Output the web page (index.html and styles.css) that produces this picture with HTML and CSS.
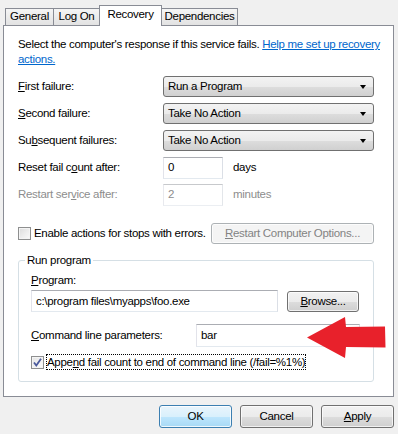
FILE: index.html
```
<!DOCTYPE html>
<html lang="en">
<head>
    <meta charset="UTF-8">
    <meta name="viewport" content="width=device-width, initial-scale=1.0">
    <title>Service Properties - Recovery</title>
    <link rel="stylesheet" href="styles.css">
</head>
<body>
    <div class="tabs">
        <div class="tab tab-general">General</div>
        <div class="tab tab-logon">Log On</div>
        <div class="tab tab-active">Recovery</div>
        <div class="tab tab-deps">Dependencies</div>
    </div>

    <div class="panel">
        <p class="intro">Select the computer's response if this service fails. <a href="#">Help me set up recovery<br>actions.</a></p>

        <!-- Acciones por fallo -->
        <div class="failures">
            <span class="label"><u>F</u>irst failure:</span>
            <div class="combo"><span>Run a Program</span><span class="caret"></span></div>

            <span class="label"><u>S</u>econd failure:</span>
            <div class="combo"><span>Take No Action</span><span class="caret"></span></div>

            <span class="label">Su<u>b</u>sequent failures:</span>
            <div class="combo"><span>Take No Action</span><span class="caret"></span></div>

            <span class="label">Reset fail c<u>o</u>unt after:</span>
            <div class="with-unit">
                <div class="textbox short">0</div>
                <span>days</span>
            </div>

            <span class="label disabled">Restart ser<u>v</u>ice after:</span>
            <div class="with-unit disabled">
                <div class="textbox short textbox-off">2</div>
                <span>minutes</span>
            </div>
        </div>

        <div class="check-row">
            <span class="checkbox"></span>
            <span>Enable actions for stops with errors.</span>
            <div class="button button-off restart-btn"><u>R</u>estart Computer Options...</div>
        </div>

        <fieldset class="group">
            <legend>Run program</legend>
            <div class="group-body">
                <div class="field-label"><u>P</u>rogram:</div>
                <div class="program-row">
                    <div class="textbox program-box">c:\program files\myapps\foo.exe</div>
                    <div class="button browse-btn"><u>B</u>rowse...</div>
                </div>

                <div class="command-row">
                    <span class="command-label"><u>C</u>ommand line parameters:</span>
                    <div class="textbox command-box">bar</div>
                </div>

                <div class="append-row">
                    <span class="checkbox checked">
                        <svg width="11" height="11" viewBox="0 0 11 11"><path d="M2 5.5 L4.3 8.5 L9 1.8" fill="none" stroke="#4b5a9c" stroke-width="1.8"/></svg>
                    </span>
                    <span class="focus-text">Appe<u>n</u>d fail count to end of command line (/fail=%1%)</span>
                </div>
            </div>
        </fieldset>
    </div>

    <div class="actions">
        <div class="button button-default">OK</div>
        <div class="button">Cancel</div>
        <div class="button"><u>A</u>pply</div>
    </div>

    <!-- flecha roja encima del diálogo -->
    <svg class="arrow" width="80" height="43" viewBox="0 0 80 43">
        <path d="M0 21.5 L38 1 L39 11 L78 10.5 L78.5 31.5 L39 31 L38 42 Z" fill="#e8212b"/>
    </svg>
</body>
</html>
```

FILE: styles.css
```
body {
    margin: 0;
    width: 398px;
    height: 434px;
    overflow: hidden;
    background-color: #f0f0f0;
    font-family: "Liberation Sans", Arial, sans-serif;
    font-size: 11.5px;
    letter-spacing: -0.3px;
    line-height: 15px;
    color: #000;
}

u {
    text-decoration: underline;
    text-underline-offset: 1px;
}

/* pestañas */
.tabs {
    display: flex;
    align-items: flex-end;
    height: 21px;
    padding: 5px 0 0 5px;
    margin-bottom: -1px;
}

.tab {
    box-sizing: border-box;
    height: 17px;
    margin-bottom: 1px;
    margin-left: -1px;
    border: 1px solid #898c95;
    border-bottom: none;
    background: linear-gradient(#f5f5f5, #e2e2e2);
    text-align: center;
    line-height: 15px;
}

.tab-general { width: 49px; margin-left: 0; }
.tab-logon { width: 47px; }
.tab-deps { width: 77px; }

.tab-active {
    width: 63px;
    height: 21px;
    margin-bottom: 0;
    background: #fff;
    position: relative;
    z-index: 1;
    line-height: 17px;
}

.panel {
    box-sizing: border-box;
    width: 391px;
    margin-left: 3px;
    border: 1px solid #898c95;
    background-color: #fff;
    padding: 11px 19px 14px 14px;
}

.intro {
    margin: 0;
    white-space: nowrap;
}

a {
    color: #0066cc;
}

.failures {
    display: grid;
    grid-template-columns: 145px 211px;
    grid-auto-rows: 21px;
    row-gap: 6px;
    align-items: center;
    margin-top: 9px;
}

.disabled {
    color: #8d8d8d;
}

.combo {
    box-sizing: border-box;
    height: 21px;
    display: flex;
    align-items: center;
    justify-content: space-between;
    padding: 0 7px 0 4px;
    border: 1px solid #707070;
    border-radius: 3px;
    background: linear-gradient(#f3f3f3 0%, #ebebeb 50%, #dddddd 51%, #d0d0d0 100%);
}

.caret {
    width: 0;
    height: 0;
    border-left: 3.5px solid transparent;
    border-right: 3.5px solid transparent;
    border-top: 4px solid #000;
}

.with-unit {
    display: flex;
    align-items: center;
    gap: 10px;
}

.textbox {
    box-sizing: border-box;
    height: 22px;
    display: flex;
    align-items: center;
    padding-left: 4px;
    border: 1px solid;
    border-color: #abadb3 #dbdfe6 #e3e9ef #e2e3ea;
    background-color: #fff;
}

.short {
    width: 60px;
}

.textbox-off {
    border-color: #c7c9cc #e3e6ea #ebeef2 #e8e9ee;
}

.check-row {
    display: flex;
    align-items: center;
    gap: 3px;
    margin-top: 18px;
}

.checkbox {
    box-sizing: border-box;
    width: 13px;
    height: 13px;
    display: flex;
    align-items: center;
    justify-content: center;
    border: 1px solid #8e8f8f;
    background: linear-gradient(135deg, #dcdcdc, #fbfbfb);
    box-shadow: inset 0 0 0 1px #f4f4f4;
}

.checked {
    background: linear-gradient(135deg, #e4e4e4, #fdfdfd);
}

.button {
    box-sizing: border-box;
    width: 73px;
    height: 23px;
    display: flex;
    align-items: center;
    justify-content: center;
    border: 1px solid #707070;
    border-radius: 3px;
    background: linear-gradient(#f2f2f2 0%, #ebebeb 50%, #dddddd 51%, #cfcfcf 100%);
    box-shadow: inset 0 0 0 1px rgba(255, 255, 255, 0.7);
}

.button-off {
    color: #838383;
    border-color: #adb2b5;
    background: #f4f4f4;
}

.restart-btn {
    width: 163px;
    height: 21px;
    margin-left: auto;
}

.button-default {
    border-color: #3c7fb1;
    background: linear-gradient(#e9f5fc 0%, #d9f0fc 50%, #bee6fd 51%, #a7d9f5 100%);
    box-shadow: inset 0 0 0 1px rgba(255, 255, 255, 0.8);
}

/* grupo "Run program" */
.group {
    margin: 9px 0 0;
    padding: 0;
    border: 1px solid #d5dfe5;
    border-radius: 3px;
}

.group legend {
    margin-left: 6px;
    padding: 0 2px;
}

.group-body {
    padding: 5px 13px 12px 12px;
}

.program-row {
    display: flex;
    align-items: center;
    gap: 9px;
    margin-top: 2px;
}

.program-box {
    width: 247px;
}

.browse-btn {
    width: 72px;
    height: 21px;
}

.command-row {
    display: flex;
    align-items: center;
    margin-top: 12px;
}

.command-label {
    width: 165px;
}

.command-box {
    width: 164px;
    height: 23px;
}

.append-row {
    display: flex;
    align-items: center;
    gap: 3px;
    margin-top: 8px;
}

.focus-text {
    outline: 1px dotted #000;
    line-height: 14px;
}

.actions {
    display: flex;
    justify-content: flex-end;
    gap: 8px;
    padding: 8px 4px 0 0;
}

.arrow {
    position: absolute;
    left: 307px;
    top: 316px;
}
```
